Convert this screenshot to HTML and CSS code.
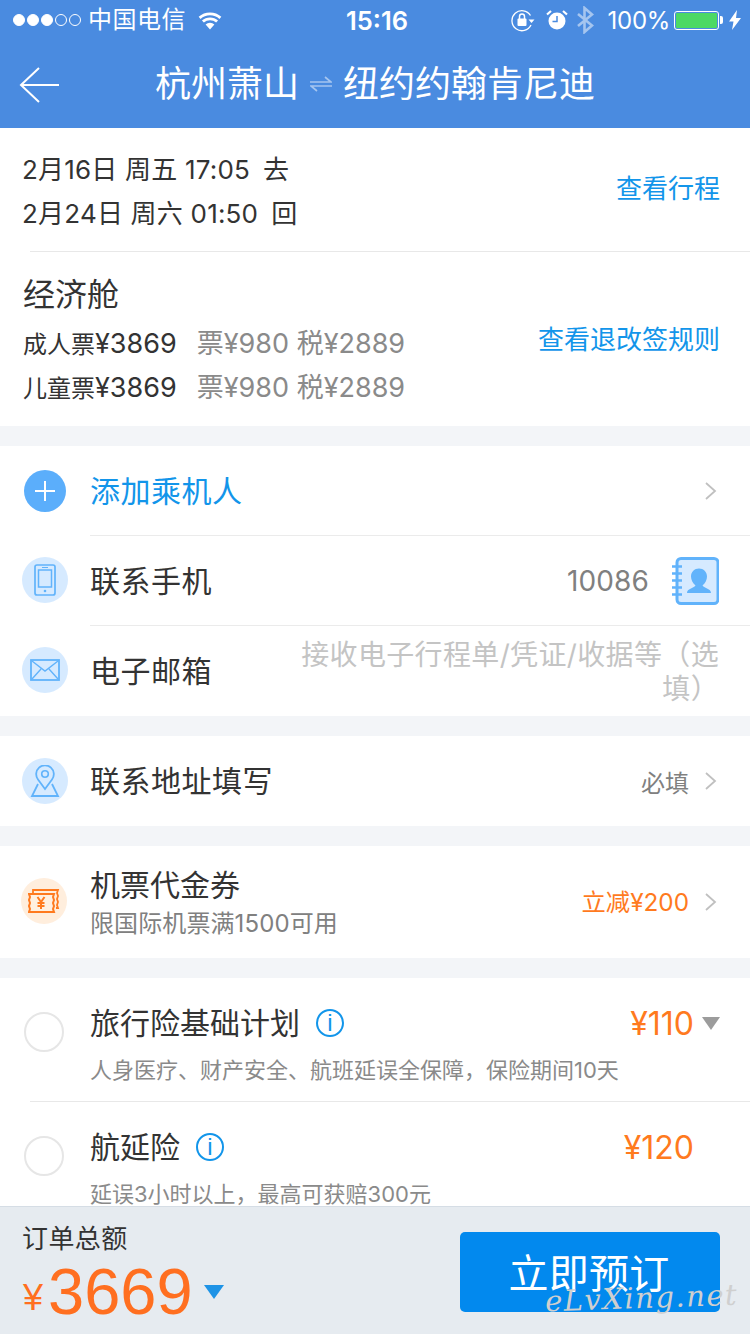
FILE: index.html
```html
<!DOCTYPE html>
<html lang="zh-CN">
<head>
    <title>订单填写</title>
    <meta charset="UTF-8">
    <meta name="viewport" content="width=device-width, initial-scale=1.0">
    <link rel="stylesheet" href="styles.css">
</head>
<body>
<div class="page">
    <header class="top">
        <div class="status">
            <div class="status-left">
                <span class="dots"><i class="on"></i><i class="on"></i><i class="on"></i><i></i><i></i></span>
                <span class="carrier">中国电信</span>
                <svg class="wifi" width="26" height="20" viewBox="0 0 26 20"><path d="M13 19.5 8.6 14.6a6.4 6.4 0 0 1 8.8 0z" fill="#fff"/><path d="M5.9 11.6a10.4 10.4 0 0 1 14.2 0M2.6 7.9a15.4 15.4 0 0 1 20.8 0" fill="none" stroke="#fff" stroke-width="2.8"/></svg>
            </div>
            <div class="clock">15:16</div>
            <div class="status-right">
                <svg width="24" height="24" viewBox="0 0 24 24"><path d="M19.5 7.5A10 10 0 1 0 20 17" fill="none" stroke="#fff" stroke-width="1.3"/><path d="M17.5 11.5h6l-3 3.5z" fill="#fff"/><rect x="6.5" y="10.5" width="9" height="7.5" rx="1" fill="#fff"/><path d="M8.5 11V8.5a2.5 2.5 0 0 1 5 0V11" fill="none" stroke="#fff" stroke-width="1.5"/></svg>
                <svg class="alarm" width="22" height="22" viewBox="0 0 22 22"><circle cx="11" cy="12" r="8.5" fill="#fff"/><path d="M11 7v5.5H6.5" fill="none" stroke="#4a8be0" stroke-width="1.5"/><path d="M1 5.5 5 2M21 5.5 17 2" stroke="#fff" stroke-width="2.2"/></svg>
                <svg class="bt" width="18" height="28" viewBox="0 0 18 28"><path d="M2 8 16 19.5 8.5 26V2L16 8.5 2 20" fill="none" stroke="#a5c5ef" stroke-width="2.6"/></svg>
                <span class="percent">100%</span>
                <span class="battery"><i></i></span>
                <svg class="bolt" width="12" height="20" viewBox="0 0 12 20"><path d="M8 0 0 11.5h4.5L3 20l9-12H7z" fill="#fff"/></svg>
            </div>
        </div>
        <div class="nav">
            <svg class="back" width="40" height="36" viewBox="0 0 40 36"><path d="M20 1 2 18l18 17M2 18h38" fill="none" stroke="#fff" stroke-width="2"/></svg>
            <div class="route">
                <span>杭州萧山</span>
                <svg width="22" height="16" viewBox="0 0 22 16"><path d="M0 6h21L15 1M22 10H1l6 5" fill="none" stroke="#a5c5ef" stroke-width="1.7"/></svg>
                <span>纽约约翰肯尼迪</span>
            </div>
        </div>
    </header>

    <main class="content">
        <section class="card">
            <div class="trip">
                <div class="trip-lines">
                    <div class="line">2月16日 周五 17:05<span class="dir">去</span></div>
                    <div class="line">2月24日 周六 01:50<span class="dir">回</span></div>
                </div>
                <a class="link trip-link">查看行程</a>
            </div>
            <div class="fare">
                <div>
                    <div class="cabin">经济舱</div>
                    <div class="line"><span class="kind">成人票</span>¥3869<span class="muted">票¥980 税¥2889</span></div>
                    <div class="line"><span class="kind">儿童票</span>¥3869<span class="muted">票¥980 税¥2889</span></div>
                </div>
                <a class="link rules">查看退改签规则</a>
            </div>
        </section>

        <section class="card">
            <div class="row">
                <span class="plus"><svg width="42" height="42" viewBox="0 0 42 42"><path d="M11 21h20M21 11v20" stroke="#fff" stroke-width="2"/></svg></span>
                <div class="row-body add-row">
                    <span class="row-title wide blue">添加乘机人</span>
                    <svg class="chevron" width="14" height="22" viewBox="0 0 14 22"><path d="M2 3l9 8-9 8" fill="none" stroke="#c0c0c0" stroke-width="1.8"/></svg>
                </div>
            </div>
            <div class="row">
                <span class="round"><svg width="22" height="32" viewBox="0 0 22 32"><rect x="1" y="1" width="20" height="30" rx="2" fill="none" stroke="#61b3fb" stroke-width="1.7"/><rect x="4.5" y="6" width="13" height="17" fill="none" stroke="#61b3fb" stroke-width="1.5"/><circle cx="11" cy="27" r="1.3" fill="#61b3fb"/><path d="M8 3.5h6" stroke="#61b3fb"/></svg></span>
                <div class="row-body">
                    <span class="row-title wide">联系手机</span>
                    <span class="phone">10086</span>
                    <svg class="book" width="48" height="48" viewBox="0 0 48 48"><rect x="6" y="1.5" width="41" height="45" rx="4" fill="#d6eaff" stroke="#61b3fb" stroke-width="3"/><path d="M1 9.5h10M1 16.5h10M1 23.5h10M1 30.5h10M1 37.5h10" stroke="#61b3fb" stroke-width="2.5"/><path d="M16 36c0-4.5 6.5-4.5 8.5-7.5-3-2.5-4.5-6-4.500-9 0-4.500 3.500-8 8-8s8 3.500 8 8c0 3-1.500 6.500-4.500 9 2 3 8.500 3 8.500 7.500z" fill="#61b3fb"/></svg>
                </div>
            </div>
            <div class="row">
                <span class="round"><svg width="30" height="22" viewBox="0 0 30 22"><rect x="1" y="1" width="28" height="20" fill="none" stroke="#61b3fb" stroke-width="1.8"/><path d="M2 2l13 10L28 2M2 20l9-10M28 20l-9-10" fill="none" stroke="#61b3fb" stroke-width="1.4"/></svg></span>
                <div class="row-body">
                    <span class="row-title wide">电子邮箱</span>
                    <span class="hint">接收电子行程单/凭证/收据等（选填）</span>
                </div>
            </div>
        </section>

        <section class="card">
            <div class="row">
                <span class="round"><svg width="30" height="32" viewBox="0 0 30 32"><path d="M15 24 8 14.5a8.8 8.8 0 1 1 14 0z" fill="none" stroke="#61b3fb" stroke-width="1.8"/><circle cx="15" cy="9" r="3.3" fill="none" stroke="#61b3fb" stroke-width="1.6"/><path d="M8 19 2 31h26l-6-12" fill="none" stroke="#61b3fb" stroke-width="1.8"/></svg></span>
                <div class="row-body">
                    <span class="row-title wide">联系地址填写</span>
                    <span class="required">必填</span>
                    <svg class="chevron" width="14" height="22" viewBox="0 0 14 22"><path d="M2 3l9 8-9 8" fill="none" stroke="#c0c0c0" stroke-width="1.8"/></svg>
                </div>
            </div>
        </section>

        <section class="card">
            <div class="row coupon">
                <span class="round orange"><svg width="32" height="26" viewBox="0 0 32 26"><path d="M5 5V2h25l-1 3 1 3-1 3 1 3-1 3 1 3h-2" fill="none" stroke="#ff7a1e" stroke-width="1.8"/><path d="M1 6h25l-1 3 1 3-1 3 1 3-1 3 1 3H1l1-3-1-3 1-3-1-3 1-3z" fill="#fff0e0" stroke="#ff7a1e" stroke-width="2"/><path d="M9.5 9l3.5 5 3.5-5M9.5 15h7M9.5 18h7M13 14v7" fill="none" stroke="#ff7a1e" stroke-width="2"/></svg></span>
                <div class="row-body">
                    <div class="coupon-text">
                        <div class="row-title">机票代金券</div>
                        <div class="coupon-sub">限国际机票满1500可用</div>
                    </div>
                    <span class="discount">立减¥200</span>
                    <svg class="chevron" width="14" height="22" viewBox="0 0 14 22"><path d="M2 3l9 8-9 8" fill="none" stroke="#c0c0c0" stroke-width="1.8"/></svg>
                </div>
            </div>
        </section>

        <section class="card">
            <div class="plan">
                <span class="radio"></span>
                <div class="plan-body">
                    <div class="plan-head">
                        <span class="row-title">旅行险基础计划</span>
                        <span class="info">i</span>
                        <span class="price">¥110</span>
                        <i class="price-down"></i>
                    </div>
                    <div class="plan-sub">人身医疗、财产安全、航班延误全保障，保险期间10天</div>
                </div>
            </div>
            <div class="plan plan-next">
                <span class="radio"></span>
                <div class="plan-body">
                    <div class="plan-head">
                        <span class="row-title">航延险</span>
                        <span class="info">i</span>
                        <span class="price no-caret">¥120</span>
                    </div>
                    <div class="plan-sub">延误3小时以上，最高可获赔300元</div>
                </div>
            </div>
        </section>
    </main>

    <footer class="bottom">
        <div class="total">
            <div class="total-label">订单总额</div>
            <div class="total-price"><span class="yen">¥</span><span class="amount">3669</span><i class="total-down"></i></div>
        </div>
        <button class="book-btn">立即预订</button>
        <div class="watermark">eLvXing.net</div>
    </footer>
</div>
</body>
</html>
```

FILE: styles.css
```css
html, body {
    margin: 0;
    padding: 0;
    overflow: hidden;
}

body {
    font-family: Inter, "Noto Sans CJK SC", sans-serif;
    color: #333;
    background: #f3f5f8;
}

.page {
    width: 750px;
    height: 1334px;
    display: flex;
    flex-direction: column;
    overflow: hidden;
}

/* header */
.top {
    height: 128px;
    flex: none;
    background: #4a8be0;
    color: #fff;
}

.status {
    height: 40px;
    padding: 0 9px 0 13px;
    display: grid;
    grid-template-columns: 1fr auto 1fr;
    align-items: center;
}

.status-left, .status-right {
    display: flex;
    align-items: center;
}

.status-right {
    justify-content: flex-end;
    gap: 8px;
}

.dots {
    display: flex;
    gap: 2px;
}

.dots i {
    width: 12px;
    height: 12px;
    box-sizing: border-box;
    border: 1px solid #fff;
    border-radius: 50%;
}

.dots i.on {
    background: #fff;
}

.carrier {
    margin-left: 7px;
    font-size: 24px;
    letter-spacing: .5px;
    line-height: 40px;
}

.wifi {
    margin-left: 11px;
}

.clock {
    padding-top: 1px;
    font-size: 25.5px;
    font-weight: 600;
}

.alarm {
    margin-left: 3px;
}

.percent {
    margin-left: 6px;
    font-size: 24px;
    letter-spacing: -0.3px;
}

.battery {
    width: 45px;
    height: 19px;
    margin-left: -4px;
    padding: 1px;
    box-sizing: border-box;
    border: 1px solid #fff;
    border-radius: 3px;
    position: relative;
}

.battery i {
    display: block;
    height: 100%;
    background: #4cd964;
    border-radius: 1px;
}

.battery:after {
    content: "";
    position: absolute;
    right: -5px;
    top: 4px;
    width: 3px;
    height: 8px;
    background: #fff;
    border-radius: 0 2px 2px 0;
}

.bolt {
    margin-left: 2px;
}

.nav {
    height: 88px;
    padding-left: 19px;
    display: flex;
    align-items: center;
}

.back {
    flex: none;
    margin-top: 2px;
}

.route {
    margin-left: 96px;
    display: flex;
    align-items: center;
    gap: 11px;
    font-size: 36px;
    line-height: 88px;
    white-space: nowrap;
}

/* content */
.content {
    flex: 1;
    min-height: 0;
    overflow: hidden;
}

.card {
    background: #fff;
    margin-bottom: 20px;
}

.line {
    font-size: 26px;
    line-height: 44px;
    white-space: nowrap;
}

.link {
    color: #1295ea;
    font-size: 26px;
    line-height: 36px;
}

.trip {
    height: 124px;
    margin-left: 30px;
    padding-right: 30px;
    box-sizing: border-box;
    border-bottom: 1px solid #e8e8e8;
    display: flex;
    justify-content: space-between;
    align-items: center;
}

.trip-lines {
    margin-left: -8px;
    margin-top: 5px;
    letter-spacing: .2px;
}

.dir {
    margin-left: 13px;
}

.trip-link {
    margin-top: -2px;
}

.fare {
    height: 174px;
    padding: 21px 30px 0 23px;
    box-sizing: border-box;
    display: flex;
    justify-content: space-between;
}

.fare .line {
    font-size: 27px;
}

.fare .line + .line {
    margin-top: -1px;
}

.cabin {
    font-size: 32px;
    line-height: 44px;
    margin-bottom: 5px;
}

.kind {
    font-size: 24px;
}

.muted {
    margin-left: 20px;
    color: #8a8a8a;
}

.rules {
    margin-top: 49px;
}

/* list rows */
.row {
    display: flex;
    align-items: stretch;
    padding-left: 22px;
}

.row-body {
    flex: 1;
    min-width: 0;
    height: 89px;
    margin-left: 22px;
    padding-right: 30px;
    display: flex;
    align-items: center;
    border-top: 1px solid #ebebeb;
}

.row:first-child .row-body {
    border-top: 0;
}

.row:last-child .row-body {
    height: 90px;
}

.add-row {
    justify-content: space-between;
}

.row-title {
    font-size: 30px;
    line-height: 40px;
    white-space: nowrap;
}

.wide {
    letter-spacing: .5px;
}

.blue {
    color: #1295ea;
}

.round {
    flex: none;
    width: 46px;
    height: 46px;
    margin-top: 22px;
    border-radius: 50%;
    background: #d6eaff;
    display: flex;
    align-items: center;
    justify-content: center;
}

.round.orange {
    background: #ffeedd;
    margin-left: -1px;
    margin-right: 1px;
    margin-top: 32px;
}

.plus {
    flex: none;
    width: 42px;
    height: 42px;
    margin: 24px 2px 0 2px;
    border-radius: 50%;
    background: #5baefb;
}

.plus svg {
    display: block;
}

.chevron {
    flex: none;
    margin-left: 15px;
    margin-right: 2px;
}

.phone {
    margin-left: auto;
    font-size: 28px;
    letter-spacing: .1px;
    color: #808080;
}

.book {
    flex: none;
    margin-left: 22px;
    margin-right: 1px;
}

.hint {
    width: 422px;
    margin-left: auto;
    margin-right: 1px;
    margin-top: 1px;
    font-size: 28px;
    letter-spacing: .35px;
    line-height: 34px;
    color: #c4c4c4;
    text-align: right;
}

.required {
    margin-left: auto;
    font-size: 24px;
    color: #808080;
}

.row.coupon .row-body {
    height: 112px;
    border-top: 0;
}

.coupon-sub {
    margin-top: 3px;
    font-size: 24px;
    letter-spacing: .1px;
    line-height: 32px;
    color: #808080;
}

.discount {
    margin-left: auto;
    margin-top: -4px;
    font-size: 24.3px;
    color: #ff7a1e;
}

/* insurance */
.plan {
    display: flex;
    padding-left: 24px;
}

.radio {
    flex: none;
    width: 40px;
    height: 40px;
    margin-top: 34px;
    box-sizing: border-box;
    border: 2px solid #e6e6e6;
    border-radius: 50%;
}

.plan-body {
    flex: 1;
    margin-left: 26px;
    padding: 25px 30px 0 0;
    height: 123px;
    box-sizing: border-box;
}

.plan-next {
    position: relative;
}

.plan-next:before {
    content: "";
    position: absolute;
    left: 30px;
    right: 0;
    top: 0;
    border-top: 1px solid #e8e8e8;
}

.plan-next .radio {
    margin-top: 35px;
}

.plan-next .plan-body {
    padding-top: 26px;
}

.plan-head {
    display: flex;
    align-items: center;
    height: 40px;
}

.info {
    width: 28px;
    height: 28px;
    margin-left: 16px;
    box-sizing: border-box;
    border: 2px solid #1295ea;
    border-radius: 50%;
    color: #1295ea;
    font-family: "Liberation Sans", sans-serif;
    font-size: 24px;
    line-height: 24px;
    text-align: center;
}

.price {
    margin-left: auto;
    font-size: 32px;
    color: #ff7a1e;
}

.price.no-caret {
    margin-right: 26px;
}

.price-down {
    width: 0;
    height: 0;
    margin-left: 8px;
    border-left: 9.5px solid transparent;
    border-right: 9.5px solid transparent;
    border-top: 13px solid #9c9c9c;
}

.plan-sub {
    margin-top: 11px;
    font-size: 22px;
    line-height: 32px;
    color: #8a8a8a;
    white-space: nowrap;
}

/* footer */
.bottom {
    height: 128px;
    flex: none;
    box-sizing: border-box;
    border-top: 1px solid #d5dde5;
    background: #e6ebf0;
    padding: 16px 30px 0 22px;
    display: flex;
    justify-content: space-between;
    position: relative;
}

.total-label {
    font-size: 26px;
    letter-spacing: .4px;
    line-height: 32px;
}

.total-price {
    margin-top: -3px;
    display: flex;
    align-items: center;
    color: #ff6f20;
    font-family: "Liberation Sans", sans-serif;
    line-height: 68px;
}

.yen {
    font-size: 36px;
    margin-top: 12px;
    margin-left: 1px;
    width: 25px;
}

.amount {
    font-size: 65px;
}

.total-down {
    width: 0;
    height: 0;
    margin-left: 11px;
    border-left: 10px solid transparent;
    border-right: 10px solid transparent;
    border-top: 14px solid #1e93e6;
}

.book-btn {
    width: 260px;
    height: 80px;
    margin-top: 9px;
    padding: 0 2px 2px 0;
    border: 0;
    border-radius: 5px;
    background: #0289ee;
    color: #fff;
    font-family: "Noto Sans CJK SC", sans-serif;
    font-size: 40px;
    letter-spacing: .3px;
}

.watermark {
    position: absolute;
    right: 12px;
    top: 74px;
    font-family: "DejaVu Serif", serif;
    font-style: italic;
    font-size: 29px;
    letter-spacing: 1.5px;
    color: #cfcfcf;
    transform: rotate(-2deg);
}
```
